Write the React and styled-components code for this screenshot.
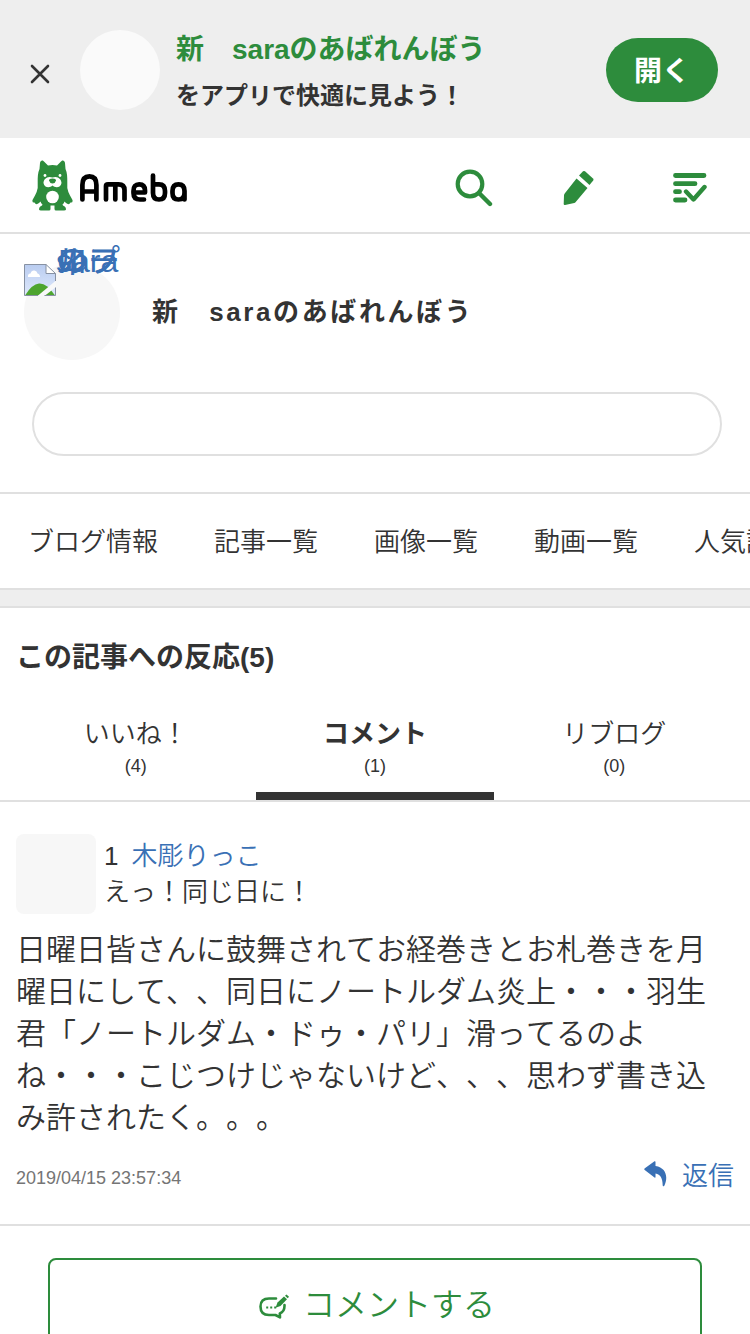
import React from "react";
import styled, { createGlobalStyle } from "styled-components";

const GlobalStyle = createGlobalStyle`
  * {
    box-sizing: border-box;
  }

  body {
    margin: 0;
    overflow: hidden;
    background: #fff;
    color: #333;
    font-family: "Liberation Sans", "Noto Sans CJK JP", sans-serif;
    font-weight: 350;
    font-kerning: none;
    text-spacing-trim: space-all;
  }
`;

const menu = ["ブログ情報", "記事一覧", "画像一覧", "動画一覧", "人気記事"];

const tabs = [
  { label: "いいね！", count: 4 },
  { label: "コメント", count: 1, active: true },
  { label: "リブログ", count: 0 },
];

const altLines = ["sara", "のプ", "ロフ", "ィー", "ル"];

const CloseIcon = () => (
  <svg width="20" height="20" viewBox="0 0 20 20">
    <path
      d="M2 2l16 16M18 2L2 18"
      stroke="#333"
      strokeWidth="2.6"
      strokeLinecap="round"
    />
  </svg>
);

const Mascot = () => (
  <svg width="42" height="51" viewBox="0 0 42 51" fill="#2d8c3c">
    <path d="M8 3C8.300 0 11 -.500 12.500 2L16 5.500Q20.500 4.500 25 5.500L28.500 2C30 -.500 32.700 0 33 3L33.500 9C35.300 13 35.300 17 35.300 22V28Q36 32 38 35.500L40.500 40Q41 43 38.500 42.500Q37 45.500 34 43L32.500 41.500Q32 43.500 30.500 44.500L31 45.500Q34 46.500 34 49.500Q33.800 50.500 32 50.500H24Q22.500 50.500 22.500 49V45.500H18.500V49Q18.500 50.500 17 50.500H9Q7.300 50.500 7 49.500Q7 46.500 10 45.500L10.500 44.500Q9 43.500 8.500 41.500L7 43Q4 45.500 2.500 42.500Q0 43 .500 40L3 35.500Q5 32 5.700 28V22C5.700 17 5.700 13 7.500 9Z" />
    <path
      d="M20.500 17.500C15 15.500 11.500 19.500 11.500 23C12 27.500 17.500 28.500 20.500 25.500C23.500 28.500 29 27.500 29.500 23C29.500 19.500 26 15.500 20.500 17.500Z"
      fill="#fff"
    />
    <path d="M17 20.500Q17 18.500 20.500 18.500T24 20.500Q23.500 23 20.500 23.500Q17.500 23 17 20.500Z" />
    <circle cx="13" cy="15.500" r="1.400" fill="#fff" />
    <circle cx="28" cy="15.500" r="1.400" fill="#fff" />
    <circle cx="20.500" cy="37" r="6.300" fill="#fff" />
  </svg>
);

const Wordmark = () => (
  <svg
    width="108"
    height="30"
    viewBox="0 0 108 30"
    fill="none"
    stroke="#000"
    strokeWidth="4.7"
    strokeLinecap="round"
    strokeLinejoin="round"
  >
    <path d="M2.400 26.500V12Q2.400 3.300 9.400 3.300T16.400 12V26.500M2.400 18.500H16.400" />
    <path d="M26 26.500V13Q26 11.300 28 11.300H38.500Q44.500 11.300 44.500 17V26.500M35.300 12V26.500" />
    <path d="M53.500 19.500H65V17.500Q65 11.300 59.200 11.300T53.500 18V20Q53.500 26.500 60 26.500H64" />
    <path d="M73 2.500V20Q73 26.500 79 26.500T85 20V18Q85 11.300 79 11.300H74" />
    <path d="M104.500 26.500V18Q104.500 11.300 98.500 11.300T92.500 18V20Q92.500 26.500 98.500 26.500T104.500 20" />
  </svg>
);

const SearchIcon = () => (
  <svg width="38" height="38" viewBox="0 0 38 38" fill="none" stroke="#2d8c3c">
    <circle cx="15" cy="15" r="12.300" strokeWidth="4.2" />
    <path d="M24 24l11 11" strokeWidth="4.400" strokeLinecap="round" />
  </svg>
);

const PencilIcon = () => (
  <svg width="32" height="36" viewBox="0 0 32 36" fill="#2d8c3c">
    <path d="M13.500 8.500L24.500 18L12.500 32.200Q12 32.700 11.300 32.900L2 35Q.700 35.200 .700 34L1 25.500Q1 24.300 1.700 23.500Z" />
    <path d="M16 5.500L20 1.300Q21 .500 22 1.300L30 8.500Q31 9.500 30.200 10.500L26.500 15Z" />
  </svg>
);

const ListIcon = () => (
  <svg
    width="34"
    height="32"
    viewBox="0 0 34 32"
    fill="none"
    stroke="#2d8c3c"
    strokeWidth="4.8"
    strokeLinecap="round"
    strokeLinejoin="round"
  >
    <path d="M2.500 3.500H31M2.500 11.700H22M2.500 19.700H6.500M2.500 28H12" />
    <path d="M13 19.500L20.500 27.500L31.500 15" strokeWidth="4.4" />
  </svg>
);

const BrokenImage = () => (
  <svg width="32" height="32" viewBox="0 0 32 32">
    <defs>
      <linearGradient id="sky" x1="0" y1="0" x2="0" y2="1">
        <stop stopColor="#b9ccf0" />
        <stop offset="1" stopColor="#dfe9fc" />
      </linearGradient>
    </defs>
    <path d="M.500 .500H22L31.500 9.500V31.500H.500Z" fill="url(#sky)" />
    <path
      d="M4 13Q3.500 9.800 6.500 9.500Q7.500 6 10.500 6.500Q13 7 13.500 9.500Q16 10 16 13H4Z"
      fill="#fff"
    />
    <path d="M1 31.500Q8 20 15 19.500Q23 19 31 31.500Z" fill="#4da52f" />
    <path d="M32 16.500L13.500 32H20.500L32 23Z" fill="#f9f9f9" />
    <path d="M22 .500V9.500H31.500Z" fill="#fff" />
    <path
      d="M31.500 17V9.500L22 .500H.500V31.500H14M20.500 31.500H31.500V23.500M22 .500V9.500H31.500"
      fill="none"
      stroke="#8791a2"
    />
  </svg>
);

const ReplyIcon = () => (
  <svg width="24" height="26" viewBox="0 0 24 26" fill="#3970b5">
    <path d="M.500 7.500Q0 8.500 .700 9L10.500 16.500Q11.500 17 11.500 16V12.500C16.500 13.500 18.500 17 18.700 24.500Q19 26 20.300 24.800C24.500 16 22 6.500 11.500 5V1Q11.500 0 10.500 .300Z" />
  </svg>
);

const CommentIcon = () => (
  <svg width="30" height="25" viewBox="0 0 30 25" fill="none" stroke="#2d8c3c">
    <path
      d="M17 4.500H10Q1.500 4.500 1.500 12.500Q1.500 21 10 21H16.500L21 23.300L20.800 19.500Q25.800 17.500 25.500 11"
      strokeWidth="2.600"
      strokeLinecap="round"
      strokeLinejoin="round"
    />
    <path d="M7.200 13.500h2m2 0h2m2 0h2" strokeWidth="2" />
    <path
      d="M16.500 13.700L18.500 8.500L25 2.500L28 5.300L21.500 12Z"
      fill="#2d8c3c"
      stroke="none"
    />
    <path
      d="M26 1.700L27.500 .500L30 2.800L28.700 4.300Z"
      fill="#2d8c3c"
      stroke="none"
    />
  </svg>
);

const App = () => (
  <>
    <GlobalStyle />
    <Page>
      <Banner>
        <Close aria-label="閉じる">
          <CloseIcon />
        </Close>
        <BannerPhoto />
        <BannerText>
          <BannerTitle>新　saraのあばれんぼう</BannerTitle>
          <BannerLead>をアプリで快適に見よう！</BannerLead>
        </BannerText>
        <OpenButton>開く</OpenButton>
      </Banner>
      <Header>
        <Logo>
          <Mascot />
          <Wordmark />
        </Logo>
        <Tools>
          <SearchIcon />
          <PencilIcon />
          <ListIcon />
        </Tools>
      </Header>
      <Profile>
        <Owner>
          <Avatar>
            <BrokenImage />
            <AltText>
              {altLines.map((line) => (
                <AltLine key={line}>{line}</AltLine>
              ))}
            </AltText>
          </Avatar>
          <BlogTitle>新　saraのあばれんぼう</BlogTitle>
        </Owner>
        <FollowBox />
      </Profile>
      <Menu>
        {menu.map((item) => (
          <MenuItem key={item}>{item}</MenuItem>
        ))}
      </Menu>
      <Divider />
      <Heading>この記事への反応(5)</Heading>
      <Tabs>
        {tabs.map(({ label, count, active }) => (
          <Tab key={label} $active={active}>
            {label}
            <Count>({count})</Count>
          </Tab>
        ))}
      </Tabs>
      <Comment>
        <CommentHead>
          <CommentPhoto />
          <div>
            <CommentLine>
              1<Author>木彫りっこ</Author>
            </CommentLine>
            <CommentLine>えっ！同じ日に！</CommentLine>
          </div>
        </CommentHead>
        <Body>
          日曜日皆さんに鼓舞されてお経巻きとお札巻きを月曜日にして、、同日にノートルダム炎上・・・羽生君「ノートルダム・ドゥ・パリ」滑ってるのよね・・・こじつけじゃないけど、、、思わず書き込み許されたく。。。
        </Body>
        <Meta>
          <Time>2019/04/15 23:57:34</Time>
          <Reply>
            <ReplyIcon />
            <ReplyLabel>返信</ReplyLabel>
          </Reply>
        </Meta>
      </Comment>
      <CommentButton>
        <CommentIcon />
        コメントする
      </CommentButton>
    </Page>
  </>
);

const Page = styled.main`
  width: 750px;
  height: 1334px;
  overflow: hidden;
`;

const Banner = styled.div`
  display: flex;
  height: 138px;
  padding: 0 32px 0 30px;
  background: #eee;
`;

const Close = styled.button`
  display: flex;
  width: 50px;
  height: 20px;
  margin-top: 64px;
  padding: 0;
  border: 0;
  background: none;
`;

const BannerPhoto = styled.div`
  width: 80px;
  height: 80px;
  margin: 30px 16px 0 0;
  border-radius: 50%;
  background: #fafafa;
`;

const BannerText = styled.div`
  flex: 1;
  padding-top: 29px;
  font-weight: 700;
  white-space: nowrap;
`;

const BannerTitle = styled.div`
  color: #2d8c3c;
  font-size: 28px;
  line-height: 42px;
`;

const BannerLead = styled.div`
  margin-top: 7px;
  font-size: 24px;
  line-height: 36px;
`;

const OpenButton = styled.button`
  width: 112px;
  height: 64px;
  margin-top: 38px;
  padding: 3px 0 0;
  border: 0;
  border-radius: 32px;
  background: #2d8c3c;
  color: #fff;
  font: inherit;
  font-size: 28px;
  font-weight: 700;
  line-height: 61px;
`;

const Header = styled.header`
  display: flex;
  align-items: center;
  justify-content: space-between;
  height: 96px;
  padding: 0 43px 0 32px;
  border-bottom: 2px solid #e0e0e0;
`;

const Logo = styled.div`
  display: flex;
  align-items: center;
  gap: 6px;

  svg + svg {
    margin-top: 5px;
  }
`;

const Tools = styled.div`
  display: flex;
  align-items: center;
  padding-top: 6px;

  svg + svg {
    margin-left: 70px;
  }

  svg + svg + svg {
    margin-left: 78px;
  }
`;

const Profile = styled.section`
  height: 260px;
  padding: 30px 28px 0 24px;
  border-bottom: 2px solid #e0e0e0;
`;

const Owner = styled.div`
  display: flex;
  align-items: center;
`;

const Avatar = styled.div`
  position: relative;
  flex: none;
  width: 96px;
  height: 96px;
  border-radius: 50%;
  background: #f7f7f7;

  svg {
    display: block;
  }
`;

const AltText = styled.div`
  position: absolute;
  top: -3px;
  left: 32px;
  color: #3970b5;
  font-size: 32px;
  font-weight: 400;
  line-height: 0;
  white-space: nowrap;
`;

const AltLine = styled.div`
  height: 0;
`;

const BlogTitle = styled.h1`
  margin: 0 0 0 32px;
  font-size: 26px;
  letter-spacing: 2.6px;
  line-height: 40px;
`;

const FollowBox = styled.div`
  height: 64px;
  margin: 32px 0 0 8px;
  border: 2px solid #e0e0e0;
  border-radius: 32px;
`;

const Menu = styled.nav`
  display: flex;
  height: 96px;
  overflow: hidden;
  border-bottom: 2px solid #e0e0e0;
`;

const MenuItem = styled.a`
  flex: none;
  padding: 0 28px;
  font-size: 26px;
  line-height: 96px;
`;

const Divider = styled.div`
  height: 18px;
  border-bottom: 2px solid #e0e0e0;
  background: #eee;
`;

const Heading = styled.h2`
  margin: 0;
  padding: 29px 16px 0;
  font-size: 28px;
  line-height: 41px;
`;

const Tabs = styled.div`
  display: flex;
  height: 124px;
  padding: 0 16px;
  border-bottom: 2px solid #e0e0e0;
`;

const Tab = styled.div`
  flex: 1;
  margin: 0 1px;
  padding-top: 36px;
  border-bottom: 8px solid ${({ $active }) => ($active ? "#333" : "transparent")};
  font-size: 26px;
  font-weight: ${({ $active }) => ($active ? 700 : 350)};
  line-height: 40px;
  text-align: center;
`;

const Count = styled.div`
  font-size: 18px;
  font-weight: 400;
  line-height: 24px;
`;

const Comment = styled.article`
  height: 424px;
  padding: 32px 16px 0;
  border-bottom: 2px solid #e0e0e0;
`;

const CommentHead = styled.div`
  display: flex;
  gap: 8px;
`;

const CommentPhoto = styled.div`
  width: 80px;
  height: 80px;
  border-radius: 8px;
  background: #f7f7f7;
`;

const CommentLine = styled.div`
  height: 36px;
  font-size: 26px;
  line-height: 44px;
`;

const Author = styled.a`
  margin-left: 13px;
  color: #3970b5;
`;

const Body = styled.p`
  margin: 15px 0 0;
  font-size: 30px;
  line-height: 42px;
`;

const Meta = styled.div`
  display: flex;
  align-items: center;
  justify-content: space-between;
  height: 40px;
  margin-top: 15px;
`;

const Time = styled.time`
  padding-top: 8px;
  color: #757575;
  font-size: 18px;
`;

const Reply = styled.a`
  display: flex;
  align-items: center;
  gap: 14px;
  color: #3970b5;
  font-size: 26px;
  line-height: 40px;
`;

const ReplyLabel = styled.span`
  padding-top: 4px;
`;

const CommentButton = styled.button`
  display: flex;
  align-items: center;
  justify-content: center;
  gap: 14px;
  width: 654px;
  height: 88px;
  margin: 32px 48px 0;
  padding: 0 0 0 4px;
  border: 2px solid #2d8c3c;
  border-radius: 8px;
  background: #fff;
  color: #2d8c3c;
  font: inherit;
  font-size: 32px;

  svg {
    margin-top: 8px;
  }
`;

export default App;
